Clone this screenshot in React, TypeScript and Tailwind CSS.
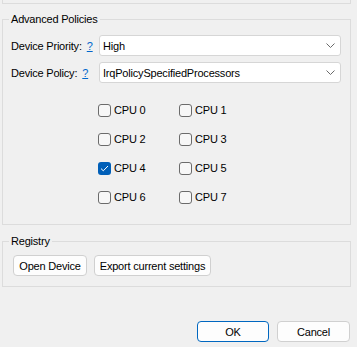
import type { ReactNode } from "react"

function Combo({ value }: { value: string }) {
  return (
    <div className="flex h-[21px] w-[242px] items-center justify-between rounded-[3px] border border-[#d6d6d6] bg-white pl-[3px] pr-[5px]">
      <span className="whitespace-nowrap leading-[16px]">{value}</span>
      <svg width="9" height="5" viewBox="0 0 9 5" fill="none">
        <path d="M0.5 0.5 L4.5 4.5 L8.5 0.5" stroke="#6a6a6a" strokeWidth="1" />
      </svg>
    </div>
  )
}

function FieldRow({ label, value }: { label: string; value: string }) {
  return (
    <div className="flex h-[21px] items-center">
      <div className="flex w-[90px] whitespace-nowrap pl-[2px] leading-[16px]">
        <span>{label}</span>
        <span className="ml-[5px] text-[#0066cc] underline">?</span>
      </div>
      <Combo value={value} />
    </div>
  )
}

function CpuBox({ label, checked }: { label: string; checked?: boolean }) {
  return (
    <div className="flex h-[16px] items-center gap-[3px]">
      {checked ? (
        <div className="flex h-[13px] w-[13px] items-center justify-center rounded-[3px] bg-[#005fb8]">
          <svg width="9" height="7" viewBox="0 0 9 7" fill="none">
            <path d="M1 3.6 L3.3 5.8 L8 1" stroke="#ffffff" strokeWidth="1" />
          </svg>
        </div>
      ) : (
        <div className="h-[13px] w-[13px] rounded-[3px] border border-[#6b6b6b] bg-[#f7f7f7]" />
      )}
      <span className="whitespace-nowrap leading-[16px]">{label}</span>
    </div>
  )
}

function Button({ children, primary, width }: { children: ReactNode; primary?: boolean; width: string }) {
  return (
    <button
      className={`flex h-[21px] items-center justify-center whitespace-nowrap rounded-[4px] border bg-[#fdfdfd] leading-[16px] ${width} ${
        primary ? "border-[#0067c0]" : "border-[#d0d0d0]"
      }`}
    >
      {children}
    </button>
  )
}

export default function App() {
  const cpus = [0, 1, 2, 3, 4, 5, 6, 7]

  return (
    <div className="flex h-[347px] w-[357px] flex-col bg-[#f0f0f0] font-['Liberation_Sans',Arial,sans-serif] text-[11px] tracking-[-0.2px] text-black">
      <div className="ml-[2px] h-[4px] w-[349px] border-x border-b border-[#dcdcdc]" />

      <fieldset className="ml-[2px] mt-[7px] w-[349px] border border-[#dcdcdc] px-[6px] pb-[19px]">
        <legend className="px-[2px] leading-[16px]">Advanced Policies</legend>
        <div className="mt-[8px] flex flex-col gap-[6px]">
          <FieldRow label="Device Priority:" value="High" />
          <FieldRow label="Device Policy:" value="IrqPolicySpecifiedProcessors" />
        </div>
        <div className="ml-[89px] mt-[19px] grid grid-cols-[81px_81px] gap-y-[13px]">
          {cpus.map((n) => (
            <CpuBox key={n} label={`CPU ${n}`} checked={n === 4} />
          ))}
        </div>
      </fieldset>

      <fieldset className="ml-[2px] mt-[8px] w-[349px] border border-[#dcdcdc] px-[6px] pb-[10px]">
        <legend className="px-[2px] leading-[16px]">Registry</legend>
        <div className="mt-[6px] flex gap-[7px] pl-[4px]">
          <Button width="w-[74px]">Open Device</Button>
          <Button width="w-[117px]">Export current settings</Button>
        </div>
      </fieldset>

      <div className="mt-[34px] flex justify-end gap-[8px] pr-[7px]">
        <Button primary width="w-[72px]">OK</Button>
        <Button width="w-[73px]">Cancel</Button>
      </div>
    </div>
  )
}
